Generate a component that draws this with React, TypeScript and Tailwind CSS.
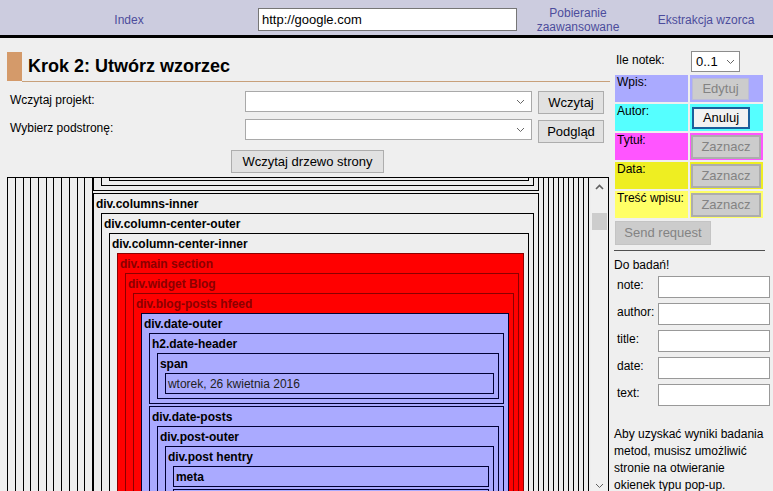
import React from "react";

type Variant = "gray" | "red" | "blue";

interface NodeProps {
  label: string;
  variant: Variant;
  plain?: boolean;
  children?: React.ReactNode;
}

const variantClass: Record<Variant, string> = {
  gray: "bg-[#eeeeee] border-black text-black",
  red: "bg-[#ff0000] border-[#8b0000] text-[#8b0000]",
  blue: "bg-[#aaaaff] border-[#000033] text-black",
};

const Node = ({ label, variant, plain, children }: NodeProps) => (
  <div className={`border ${variantClass[variant]} ${children ? "pb-[4px]" : ""}`}>
    <div
      className={`h-[19px] pt-[1px] leading-[18px] pl-[2px] text-[12px] whitespace-nowrap overflow-hidden ${
        plain ? "font-normal text-[#222]" : "font-bold"
      }`}
    >
      {label}
    </div>
    {children && <div className="ml-[7px] mr-[4px] flex flex-col gap-[2px]">{children}</div>}
  </div>
);

const Chevron = ({ up, color = "#666" }: { up?: boolean; color?: string }) => (
  <svg width="9" height="6" viewBox="0 0 9 6" fill="none">
    <polyline
      points={up ? "1,5 4.5,1.5 8,5" : "1,1 4.5,4.5 8,1"}
      stroke={color}
      strokeWidth={up ? 1.6 : 1}
    />
  </svg>
);

const FakeSelect = ({ className }: { className: string }) => (
  <div className={`bg-white border border-[#a9a9a9] flex items-center justify-end pr-[6px] ${className}`}>
    <Chevron />
  </div>
);

const Btn = ({ children, className }: { children: React.ReactNode; className: string }) => (
  <div
    className={`bg-[#e1e1e1] border border-[#adadad] text-[13px] text-black flex items-center justify-center ${className}`}
  >
    {children}
  </div>
);

const DisabledBtn = ({ children, className }: { children: React.ReactNode; className: string }) => (
  <div className={`bg-[#cccccc] text-[13px] text-[#838383] flex items-center justify-center ${className}`}>
    {children}
  </div>
);

const Tree = () => {
  const content = (
    <div className="mr-[4px] flex flex-col gap-[2px]">
      {/* previous sibling, mostly scrolled out of view */}
      <div className="border-x border-b border-black bg-[#eeeeee] pb-[4px]">
        <div className="ml-[7px] mr-[4px] border-x border-b border-black pb-[4px]">
          <div className="ml-[7px] mr-[4px] border-x border-b border-black h-[3px]" />
        </div>
      </div>
      <Node label="div.columns-inner" variant="gray">
        <Node label="div.column-center-outer" variant="gray">
          <Node label="div.column-center-inner" variant="gray">
            <Node label="div.main section" variant="red">
              <Node label="div.widget Blog" variant="red">
                <Node label="div.blog-posts hfeed" variant="red">
                  <Node label="div.date-outer" variant="blue">
                    <Node label="h2.date-header" variant="blue">
                      <Node label="span" variant="blue">
                        <Node label="wtorek, 26 kwietnia 2016" variant="blue" plain />
                      </Node>
                    </Node>
                    <Node label="div.date-posts" variant="blue">
                      <Node label="div.post-outer" variant="blue">
                        <Node label="div.post hentry" variant="blue">
                          <Node label="meta" variant="blue" />
                          <Node label="" variant="blue">
                            <Node label="" variant="blue" />
                            <Node label="" variant="blue" />
                          </Node>
                        </Node>
                      </Node>
                    </Node>
                  </Node>
                </Node>
              </Node>
            </Node>
          </Node>
        </Node>
      </Node>
    </div>
  );

  let inner: React.ReactNode = content;
  for (let i = 10; i >= 0; i--) {
    const cls =
      i === 0
        ? "ml-[7px] mr-[2px] border-x border-black"
        : i === 10
        ? "ml-[6.7px] border-l border-black"
        : "ml-[6.7px] mr-[4px] border-x border-black";
    inner = <div className={cls}>{inner}</div>;
  }

  return (
    <div className="ml-[7px] mt-[4px] w-[602px] h-[318px] border border-black flex overflow-hidden bg-[#eeeeee]">
      <div className="flex-1 overflow-hidden">{inner}</div>
      <div className="w-[17px] bg-[#f0f0f0] flex flex-col">
        <div className="h-[17px] flex items-center justify-center">
          <Chevron up color="#606060" />
        </div>
        <div className="mt-[18px] mx-[1px] h-[17px] bg-[#cdcdcd]" />
        <div className="mt-auto h-[17px] flex items-center justify-center">
          <Chevron color="#606060" />
        </div>
      </div>
    </div>
  );
};

const rows = [
  { label: "Wpis:", bg: "bg-[#aaaaff]", btn: "edytuj" },
  { label: "Autor:", bg: "bg-[#55ffff]", btn: "anuluj" },
  { label: "Tytuł:", bg: "bg-[#ff55ff]", btn: "zaznacz" },
  { label: "Data:", bg: "bg-[#eeee22]", btn: "zaznacz" },
  { label: "Treść wpisu:", bg: "bg-[#ffff66]", btn: "zaznacz" },
];

const fields = ["note:", "author:", "title:", "date:", "text:"];

export default function App() {
  return (
    <div className="w-full h-[491px] overflow-hidden bg-[#efefef] font-['Liberation_Sans',Arial,sans-serif] text-[12px] text-black">
      {/* top navigation */}
      <div className="h-[38px] pt-[4px] bg-[#ccccdf] border-b-[3px] border-black flex items-center text-[#4c4c9c]">
        <div className="w-[258px] text-center">Index</div>
        <div className="w-[259px] h-[23px] bg-white border border-[#767676] text-[13px] text-black flex items-center pl-[3px]">
          http://google.com
        </div>
        <div className="w-[122px] text-center leading-[14px]">
          Pobieranie
          <br />
          zaawansowane
        </div>
        <div className="flex-1 text-center">Ekstrakcja wzorca</div>
      </div>

      <div className="flex">
        {/* left column */}
        <div className="w-[610px] flex flex-col">
          <div className="mt-[14px] ml-[7px] flex h-[30px]">
            <div className="w-[15px] h-[29px] bg-[#d49a6a]" />
            <div className="flex-1 border-b border-[#c8a07a] pl-[6px] text-[18px] font-bold leading-[29px]">
              Krok 2: Utwórz wzorzec
            </div>
          </div>

          <div className="mt-[9px] flex items-start">
            <div className="w-[245px] pl-[10px] leading-[18px]">Wczytaj projekt:</div>
            <FakeSelect className="w-[287px] h-[21px]" />
            <Btn className="ml-[6px] w-[66px] h-[23px]">Wczytaj</Btn>
          </div>
          <div className="mt-[5px] flex items-start">
            <div className="w-[245px] pl-[10px] leading-[18px]">Wybierz podstronę:</div>
            <FakeSelect className="w-[287px] h-[21px]" />
            <Btn className="ml-[6px] mt-[1px] w-[66px] h-[23px]">Podgląd</Btn>
          </div>
          <Btn className="mt-[7px] ml-[231px] w-[153px] h-[23px]">Wczytaj drzewo strony</Btn>

          <Tree />
        </div>

        {/* right column */}
        <div className="flex-1 flex flex-col">
          <div className="mt-[13px] flex items-center">
            <div className="w-[81px] pl-[6px] -mt-[3px]">Ile notek:</div>
            <div className="w-[49px] h-[21px] bg-white border border-[#8c8c8c] flex items-center justify-between px-[4px] text-[13px]">
              <span>0..1</span>
              <Chevron />
            </div>
          </div>

          <div className="mt-[3px] ml-[5px] grid grid-cols-[73px_73px] gap-[2px]">
            {rows.map((r) => (
              <React.Fragment key={r.label}>
                <div className={`${r.bg} h-[27px] pl-[2px] leading-[15px] whitespace-nowrap`}>{r.label}</div>
                <div className={`${r.bg} h-[27px]`}>
                  {r.btn === "edytuj" && (
                    <DisabledBtn className="ml-[2px] mt-[3px] w-[57px] h-[22px] border border-[#bcbcd8]">
                      Edytuj
                    </DisabledBtn>
                  )}
                  {r.btn === "anuluj" && (
                    <div className="ml-[2px] mt-[3px] w-[58px] h-[22px] bg-[#f2f2f2] border-2 border-[#1a5f9c] text-[13px] flex items-center justify-center">
                      Anuluj
                    </div>
                  )}
                  {r.btn === "zaznacz" && (
                    <DisabledBtn className="ml-[1px] mt-[2px] w-[70px] h-[24px] border-2 border-black/15">
                      Zaznacz
                    </DisabledBtn>
                  )}
                </div>
              </React.Fragment>
            ))}
          </div>

          <DisabledBtn className="mt-[3px] ml-[5px] w-[96px] h-[24px] border border-[#c4c4c4]">
            Send request
          </DisabledBtn>

          <div className="mt-[5px] ml-[4px] w-[151px] h-px bg-[#505050]" />

          <div className="mt-[6px] ml-[4px] leading-[16px]">Do badań!</div>

          <div className="mt-[3px] flex flex-col gap-[5px]">
            {fields.map((f) => (
              <div key={f} className="flex items-start">
                <div className="w-[48px] pl-[7px] pt-[2px] leading-[14px]">{f}</div>
                <div className="w-[112px] h-[22px] bg-white border border-[#999999]" />
              </div>
            ))}
          </div>

          <p className="mt-[20px] ml-[4px] leading-[17px]">
            Aby uzyskać wyniki badania
            <br />
            metod, musisz umożliwić
            <br />
            stronie na otwieranie
            <br />
            okienek typu pop-up.
          </p>
        </div>
      </div>
    </div>
  );
}
